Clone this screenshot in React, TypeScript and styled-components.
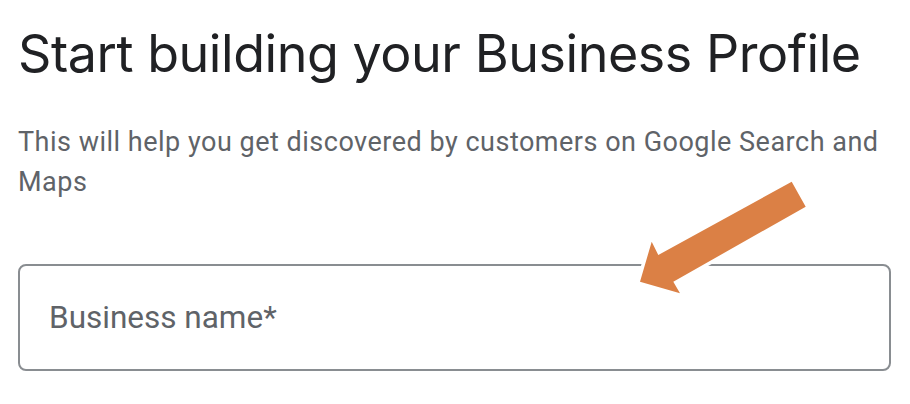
import React from "react";
import styled, { createGlobalStyle } from "styled-components";

const Global = createGlobalStyle`
  html, body { margin: 0; padding: 0; background: #ffffff; }
  body { width: 910px; height: 404px; overflow: hidden; }
`;

const Page = styled.main`
  position: relative;
  width: 910px;
  height: 404px;
  box-sizing: border-box;
  padding: 22px 19px 0 18px;
  display: flex;
  flex-direction: column;
`;

const Title = styled.h1`
  margin: 0;
  font-family: Inter, "Open Sans", sans-serif;
  font-weight: 400;
  font-size: 52px;
  line-height: 64px;
  letter-spacing: -0.45px;
  color: #202124;
`;

const Subtitle = styled.p`
  margin: 36px 0 0;
  font-family: Roboto, "Liberation Sans", sans-serif;
  font-size: 27px;
  line-height: 40px;
  color: #5f6368;
  letter-spacing: 0.5px;
`;

const Field = styled.div`
  margin-top: 62px;
  height: 107px;
  box-sizing: border-box;
  border: 2px solid #898d91;
  border-radius: 8px;
  display: flex;
  align-items: center;
  padding-left: 29px;
`;

const Placeholder = styled.span`
  font-family: Roboto, "Liberation Sans", sans-serif;
  font-size: 31.5px;
  color: #5f6368;
`;

const ArrowSvg = styled.svg`
  position: absolute;
  left: 0;
  top: 0;
  pointer-events: none;
`;

export default function App() {
  return (
    <>
      <Global />
      <Page>
        <Title>Start building your Business Profile</Title>
        <Subtitle>
          This will help you get discovered by customers on Google Search and Maps
        </Subtitle>
        <Field>
          <Placeholder>Business name*</Placeholder>
        </Field>
        <ArrowSvg width="910" height="404" viewBox="0 0 910 404">
          <polygon
            points="791.7,181.7 805.7,206.7 673.3,281.7 680,293.3 640,281.7 651.7,241.7 658.3,255"
            fill="#db8045"
            stroke="#ffffff"
            strokeWidth="7"
            strokeLinejoin="miter"
            paintOrder="stroke"
          />
        </ArrowSvg>
      </Page>
    </>
  );
}
